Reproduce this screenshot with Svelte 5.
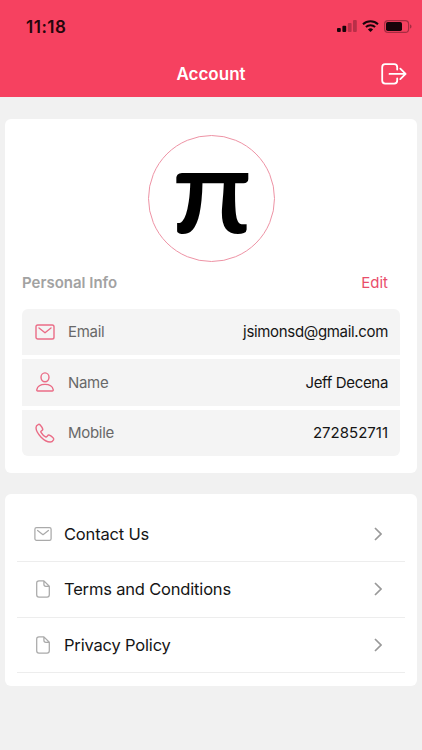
<script lang="ts">
  const details = [
    { icon: 'mail', label: 'Email', value: 'jsimonsd@gmail.com' },
    { icon: 'person', label: 'Name', value: 'Jeff Decena' },
    { icon: 'phone', label: 'Mobile', value: '272852711' },
  ];

  const links = [
    { icon: 'mail', label: 'Contact Us' },
    { icon: 'document', label: 'Terms and Conditions' },
    { icon: 'document', label: 'Privacy Policy' },
  ];
</script>

{#snippet icon(name: string)}
  <svg class="icon" viewBox="0 0 20 20" aria-hidden="true">
    {#if name === 'mail'}
      <rect x="1" y="3" width="18" height="14" rx="1.8" />
      <path d="M4 6l6 4.7L16 6" />
    {:else if name === 'person'}
      <ellipse cx="10" cy="5.3" rx="4" ry="4.4" />
      <path d="M2.8 19c-.8 0-1.2-.6-1-1.4C2.6 14 5.8 12.4 10 12.4s7.4 1.6 8.2 5.2c.2.8-.2 1.4-1 1.4z" />
    {:else if name === 'phone'}
      <path
        d="M17.8 14.5c-1-.9-2.2-1.7-3.4-2.3-.8-.4-1.3-.2-1.8.5l-.7.9c-.4.4-.8.5-1.3.2-1.9-1-3.5-2.7-4.6-4.5-.3-.5-.2-.9.3-1.3l.8-.6c.7-.5.9-1 .5-1.8C7 4.300 6.100 3.100 5.200 2 4.600 1.300 3.900 1.100 3.100 1.600 1.800 2.300 1 3.300 1 4.800c.1 3 2 6.100 4.900 9.100s6.200 5 9.300 5.100c1.500 0 2.500-.8 3.300-2.200.4-.9.1-1.600-.7-2.300z"
      />
    {:else}
      <path d="M11 1H5.500Q3 1 3 3.500v13Q3 19 5.500 19h9q2.500 0 2.500-2.500V7zM11 1v3.800Q11 7 13.200 7H17" />
    {/if}
  </svg>
{/snippet}

<div class="screen">
  <header>
    <div class="status">
      <span class="time">11:18</span>
      <div class="indicators">
        <svg width="20" height="12" viewBox="0 0 20 12" aria-hidden="true">
          <rect x="0" y="8" width="3.8" height="4" rx="1" />
          <rect x="5.4" y="5.8" width="3.8" height="6.2" rx="1" />
          <rect class="dim" x="10.8" y="3" width="3.8" height="9" rx="1" />
          <rect class="dim" x="16" y="0" width="3.8" height="12" rx="1" />
        </svg>
        <svg width="17" height="12" viewBox="0 0 17 12" aria-hidden="true">
          <g class="waves">
            <path d="M1 4.2a11 11 0 0 1 15 0" />
            <path d="M3.9 7.1a6.8 6.8 0 0 1 9.2 0" />
          </g>
          <path d="M8.5 12L5.9 9.4a3.900 3.900 0 0 1 5.200 0z" />
        </svg>
        <svg class="battery" width="28" height="13" viewBox="0 0 28 13" aria-hidden="true">
          <rect class="shell" x=".6" y=".6" width="24" height="11.8" rx="3.5" />
          <rect x="2" y="2" width="16" height="9" rx="1.8" />
          <path class="cap" d="M26 4.5c2 .5 2 3.5 0 4z" />
        </svg>
      </div>
    </div>
    <div class="navbar">
      <h1>Account</h1>
      <button class="logout" aria-label="Log out">
        <svg viewBox="0 0 26 22" aria-hidden="true">
          <path d="M16.2 6.5V4.2Q16.2 1.2 13.2 1.2H4.2Q1.2 1.2 1.2 4.2v13.4Q1.2 20.6 4.2 20.6h9Q16.2 20.6 16.2 17.6v-2.3M8.5 10.9h16M19.3 5.7l5.3 5.2-5.3 5.2" />
        </svg>
      </button>
    </div>
  </header>

  <section class="card profile">
    <div class="avatar">
      <svg viewBox="0 0 124 124" role="img" aria-label="Pi avatar">
        <text transform="translate(62.5 95.5) scale(1.13 1.03)">π</text>
      </svg>
    </div>
    <div class="heading">
      <h2>Personal Info</h2>
      <button class="edit">Edit</button>
    </div>
    <div class="details">
      {#each details as item}
        <div class="detail">
          {@render icon(item.icon)}
          <span class="label">{item.label}</span>
          <span class="value" class:digits={item.icon === 'phone'}>{item.value}</span>
        </div>
      {/each}
    </div>
  </section>

  <section class="card links">
    {#each links as link}
      <div class="link">
        {@render icon(link.icon)}
        <span>{link.label}</span>
        <svg class="chevron" viewBox="0 0 8 14" aria-hidden="true">
          <path d="M1 1l6 6-6 6" />
        </svg>
      </div>
    {/each}
  </section>
</div>

<style>
  :global(body) {
    background: #f1f1f1;
  }

  .screen {
    height: 750px;
    overflow: hidden;
    background: #f1f1f1;
    font-family: Inter, "Liberation Sans", sans-serif;
    color: #151515;
  }

  h1,
  h2 {
    margin: 0;
  }

  button {
    border: 0;
    padding: 0;
    background: none;
    font: inherit;
  }

  svg {
    display: block;
  }

  header {
    height: 97px;
    background: #f64160;
  }

  .status {
    display: flex;
    justify-content: space-between;
    box-sizing: border-box;
    height: 51px;
    padding: 16px 10px 0 26px;
  }

  .time {
    font-size: 17px;
    font-weight: 600;
    line-height: 22px;
    letter-spacing: 0.5px;
    color: #24060b;
  }

  .indicators {
    display: flex;
    gap: 5px;
    padding-top: 4px;
    fill: #17040a;
  }

  .dim {
    fill: #b92f48;
  }

  .waves {
    fill: none;
    stroke: #17040a;
    stroke-width: 2;
  }

  .shell {
    fill: none;
    stroke: #a52c41;
    stroke-width: 1.2;
  }

  .cap {
    fill: #a52c41;
  }

  .navbar {
    display: grid;
    grid-template-columns: 1fr auto 1fr;
    align-items: center;
    height: 46px;
    padding: 0 15px;
  }

  h1 {
    grid-column: 2;
    font-size: 17px;
    font-weight: 600;
    color: #fff;
  }

  .logout {
    justify-self: end;
  }

  .logout svg {
    width: 26px;
    height: 22px;
    fill: none;
    stroke: #fff;
    stroke-width: 1.8;
    stroke-linecap: round;
    stroke-linejoin: round;
  }

  .card {
    margin: 0 5px;
    border-radius: 6px;
    background: #fff;
  }

  .profile {
    box-sizing: border-box;
    height: 354px;
    margin-top: 22px;
    padding: 16px 17px 0;
  }

  .avatar {
    box-sizing: border-box;
    width: 127px;
    height: 127px;
    margin: 0 auto;
    border: 1.5px solid #ee93a5;
    border-radius: 50%;
  }

  .avatar svg {
    overflow: visible;
  }

  .avatar text {
    font-family: Lato, "Liberation Serif", serif;
    font-size: 112px;
    font-weight: 400;
    text-anchor: middle;
    fill: #000;
    stroke: #000;
    stroke-width: 2;
  }

  .heading {
    display: flex;
    align-items: center;
    justify-content: space-between;
    height: 20px;
    margin: 10.5px 12px 16px 0;
  }

  h2 {
    font-size: 15px;
    font-weight: 600;
    color: #a2a2a2;
  }

  .edit {
    font-size: 15px;
    color: #e94d6b;
  }

  .details {
    display: grid;
    gap: 4px;
    overflow: hidden;
    border-radius: 6px;
  }

  .detail {
    display: flex;
    align-items: center;
    box-sizing: border-box;
    height: 46.5px;
    padding: 0 12px 0 13px;
    background: #f4f4f4;
    font-size: 15px;
    letter-spacing: -0.33px;
  }

  .icon {
    width: 20px;
    height: 20px;
    fill: none;
    stroke: #ea6c86;
    stroke-width: 1.4;
    stroke-linecap: round;
    stroke-linejoin: round;
  }

  .label {
    margin-left: 13px;
    letter-spacing: -0.3px;
    color: #686868;
  }

  .value {
    margin-left: auto;
  }

  .digits {
    letter-spacing: 0;
  }

  .links {
    box-sizing: border-box;
    height: 192px;
    margin-top: 21px;
    padding: 12.5px 12px 0;
  }

  .link {
    display: flex;
    align-items: center;
    box-sizing: border-box;
    height: 55.5px;
    padding: 0 23px 0 17px;
    border-bottom: 1px solid #ededed;
    font-size: 16.5px;
    letter-spacing: -0.18px;
  }

  .link span {
    margin-left: 12px;
  }

  .link .icon {
    width: 18px;
    height: 18px;
    stroke: #aaa;
  }

  .chevron {
    width: 8px;
    height: 14px;
    margin-left: auto;
    fill: none;
    stroke: #999;
    stroke-width: 1.7;
  }
</style>
